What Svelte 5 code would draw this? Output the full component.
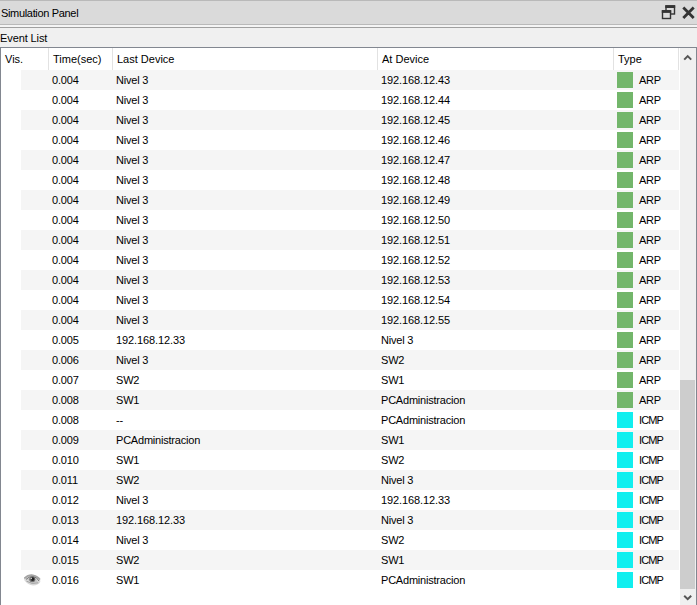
<script>
  const arp = Array.from({ length: 13 }, (_, i) => ['0.004', 'Nivel 3', `192.168.12.${43 + i}`, 'ARP']);
  const events = [
    ...arp,
    ['0.005', '192.168.12.33', 'Nivel 3', 'ARP'],
    ['0.006', 'Nivel 3', 'SW2', 'ARP'],
    ['0.007', 'SW2', 'SW1', 'ARP'],
    ['0.008', 'SW1', 'PCAdministracion', 'ARP'],
    ['0.008', '--', 'PCAdministracion', 'ICMP'],
    ['0.009', 'PCAdministracion', 'SW1', 'ICMP'],
    ['0.010', 'SW1', 'SW2', 'ICMP'],
    ['0.011', 'SW2', 'Nivel 3', 'ICMP'],
    ['0.012', 'Nivel 3', '192.168.12.33', 'ICMP'],
    ['0.013', '192.168.12.33', 'Nivel 3', 'ICMP'],
    ['0.014', 'Nivel 3', 'SW2', 'ICMP'],
    ['0.015', 'SW2', 'SW1', 'ICMP'],
    ['0.016', 'SW1', 'PCAdministracion', 'ICMP'],
  ];
  const kind = (name) => (/^\d/.test(name) ? 'ip' : 'name');
</script>

<div class="panel">
  <header class="title">
    <span>Simulation Panel</span>
    <svg class="controls" width="36" height="16" viewBox="0 0 36 16">
      <rect x="6" y="1" width="8.5" height="8" fill="#dadada" stroke="#333" stroke-width="1.4" />
      <path d="M5.3 1.6h9.9" stroke="#333" stroke-width="2.8" />
      <rect x="2.5" y="6" width="8" height="7.5" fill="#dadada" stroke="#333" stroke-width="1.4" />
      <path d="M1.8 6.5h9.4" stroke="#333" stroke-width="2.8" />
      <path d="M23.3 2.6l10.4 10.4M33.7 2.6L23.3 13" stroke="#333" stroke-width="2.8" />
    </svg>
  </header>
  <div class="divider"></div>
  <div class="caption">Event List</div>
  <div class="list">
    <div class="table">
      <div class="head">
        <div class="vis">Vis.</div>
        <div class="time">Time(sec)</div>
        <div class="last">Last Device</div>
        <div class="at">At Device</div>
        <div class="type">Type</div>
      </div>
      {#each events as [time, last, at, type], i}
        <div class="row" class:odd={i % 2 === 0}>
          <div class="vis">
            {#if i === events.length - 1}
              <svg width="17" height="12" viewBox="0 0 17 12">
                <path d="M0 4Q2 .6 7 .4Q12 .2 16 4.2L16.3 8Q14 11.5 9 11.4Q4 11 .5 6.5Z" fill="#d8d8d8" />
                <path d="M.3 4.4Q4 .8 8.5 1.2Q13 1.6 16 5.6" fill="none" stroke="#a4a4a4" stroke-width="1.6" />
                <path d="M2 5.4Q5 2.4 9 2.6Q13 3 15 7" fill="none" stroke="#777" />
                <path d="M3 5.5Q6 3 9 3.5Q12 4 13.8 7.6Q8 10 3 5.5" fill="#c4c4c4" />
                <circle cx="8.3" cy="5.3" r="3" fill="#747474" />
                <circle cx="8.6" cy="5.1" r="1.9" fill="#222" />
                <path d="M2.5 7.2Q8 10.8 14.2 8.8" fill="none" stroke="#a0a0a0" />
                <circle cx="7.3" cy="4.5" r=".7" fill="#ddd" />
              </svg>
            {/if}
          </div>
          <div class="time">{time}</div>
          <div class="last {kind(last)}">{last}</div>
          <div class="at {kind(at)}">{at}</div>
          <div class="type {type}"><i></i><span>{type}</span></div>
        </div>
      {/each}
    </div>
    <div class="scroll">
      <svg width="16" height="20" viewBox="0 0 16 20">
        <path d="M4.2 11.6L7.7 8.1L11.2 11.6" fill="none" stroke="#555" stroke-width="2" />
      </svg>
      <div class="track"><div class="thumb"></div></div>
      <svg width="16" height="16" viewBox="0 0 16 16">
        <path d="M4.2 6.7L7.7 10.2L11.2 6.7" fill="none" stroke="#555" stroke-width="2" />
      </svg>
    </div>
  </div>
</div>

<style>
  :global(body) { margin: 0; overflow: hidden; }
  .panel {
    width: 697px;
    height: 605px;
    display: flex;
    flex-direction: column;
    background: #f0f0f0;
    color: #000;
    font: 11px/20px "Liberation Sans", Arial, sans-serif;
    white-space: nowrap;
    overflow: hidden;
  }
  .title {
    box-sizing: border-box;
    height: 25px;
    flex: none;
    display: flex;
    justify-content: space-between;
    padding: 2px 1px 0;
    background: #dadada;
    border-top: 1px solid #b9b9b9;
    border-bottom: 1px solid #b9b9b9;
    letter-spacing: -0.33px;
  }
  .controls { margin-top: 2px; }
  .divider { height: 2px; flex: none; background: #f4f4f4; border-bottom: 1px solid #a0a0a0; }
  .caption { height: 19px; flex: none; line-height: 20px; letter-spacing: -0.1px; }
  .list {
    box-sizing: border-box;
    flex: 1;
    min-height: 0;
    display: flex;
    background: #fff;
    border: solid #828790;
    border-width: 1px 1px 0;
  }
  .table { width: 679px; }
  .head, .row {
    display: grid;
    grid-template-columns: 48px 64px 265px 236px 65px;
  }
  .head { height: 22px; line-height: 22px; }
  .head > div { box-sizing: border-box; padding-left: 4px; border-right: 1px solid #e2e2e2; }
  .row { height: 20px; margin-right: 1px; grid-template-columns: 28px 64px 265px 236px 65px; margin-left: 20px; }
  .row.odd { background: #f5f5f5; }
  .row > div { padding-left: 3px; }
  .row .vis svg { display: block; margin-top: 4px; }
  .row .type { display: flex; align-items: center; }
  .type i { width: 16px; height: 16px; background: #73b66b; }
  .type.ICMP i { background: #10efef; }
  .type span { margin-left: 6px; }
  .row .time { letter-spacing: -0.15px; }
  .name { letter-spacing: -0.21px; }
  .ip { letter-spacing: -0.1px; }
  .ARP span { letter-spacing: -0.3px; }
  .ICMP span { letter-spacing: -0.9px; }
  .scroll { width: 16px; flex: none; display: flex; flex-direction: column; background: #f0f0f0; }
  .scroll svg { flex: none; display: block; }
  .track { flex: 1; display: flex; flex-direction: column; justify-content: flex-end; }
  .thumb { width: 15px; height: 209px; background: #cdcdcd; }
</style>
